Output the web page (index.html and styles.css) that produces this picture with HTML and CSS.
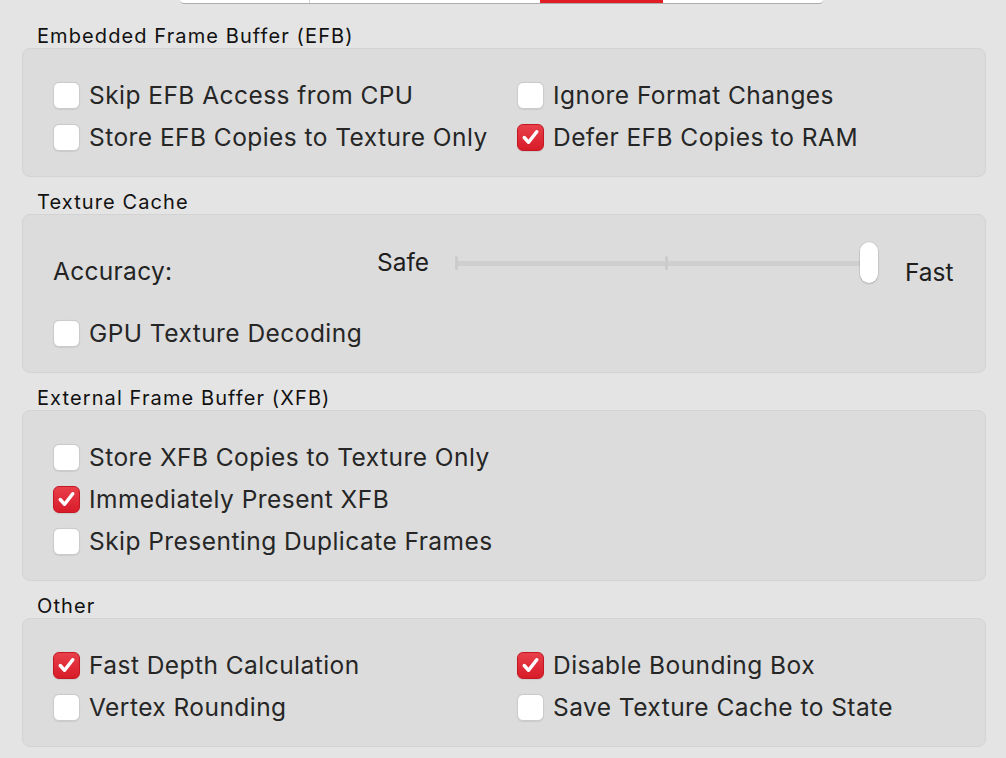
FILE: index.html
```html
<!DOCTYPE html>
<html>
<head>
<meta charset="utf-8">
<link rel="stylesheet" href="styles.css">
</head>
<body>
<div class="tabbar">
  <div class="tab tab-a"></div>
  <div class="tab tab-b"></div>
  <div class="tab tab-sel"></div>
  <div class="tab tab-c"></div>
</div>

<div class="content">
  <div class="group-title">Embedded Frame Buffer (EFB)</div>
  <div class="group">
    <div class="grid2">
      <label class="cb"><span class="box"></span><span class="lbl">Skip EFB Access from CPU</span></label>
      <label class="cb"><span class="box"></span><span class="lbl">Ignore Format Changes</span></label>
      <label class="cb"><span class="box"></span><span class="lbl">Store EFB Copies to Texture Only</span></label>
      <label class="cb"><span class="box on"><svg viewBox="0 0 26 26"><path d="M6.5 13.5 L11 18.5 L19.5 7.5"/></svg></span><span class="lbl">Defer EFB Copies to RAM</span></label>
    </div>
  </div>

  <div class="group-title">Texture Cache</div>
  <div class="group">
    <div class="slider-row">
      <span class="acc">Accuracy:</span>
      <span class="safe">Safe</span>
      <div class="slider">
        <div class="track"></div>
        <div class="tick t0"></div>
        <div class="tick t1"></div>
        <div class="knob"></div>
      </div>
      <span class="fast">Fast</span>
    </div>
    <div class="list gpu">
      <label class="cb"><span class="box"></span><span class="lbl">GPU Texture Decoding</span></label>
    </div>
  </div>

  <div class="group-title">External Frame Buffer (XFB)</div>
  <div class="group">
    <div class="list">
      <label class="cb"><span class="box"></span><span class="lbl">Store XFB Copies to Texture Only</span></label>
      <label class="cb"><span class="box on"><svg viewBox="0 0 26 26"><path d="M6.5 13.5 L11 18.5 L19.5 7.5"/></svg></span><span class="lbl">Immediately Present XFB</span></label>
      <label class="cb"><span class="box"></span><span class="lbl">Skip Presenting Duplicate Frames</span></label>
    </div>
  </div>

  <div class="group-title">Other</div>
  <div class="group">
    <div class="grid2">
      <label class="cb"><span class="box on"><svg viewBox="0 0 26 26"><path d="M6.5 13.5 L11 18.5 L19.5 7.5"/></svg></span><span class="lbl">Fast Depth Calculation</span></label>
      <label class="cb"><span class="box on"><svg viewBox="0 0 26 26"><path d="M6.5 13.5 L11 18.5 L19.5 7.5"/></svg></span><span class="lbl">Disable Bounding Box</span></label>
      <label class="cb"><span class="box"></span><span class="lbl">Vertex Rounding</span></label>
      <label class="cb"><span class="box"></span><span class="lbl">Save Texture Cache to State</span></label>
    </div>
  </div>
</div>
</body>
</html>
```

FILE: styles.css
```css
* { box-sizing: border-box; }
html, body {
  margin: 0;
  padding: 0;
  background: #e4e4e4;
  width: 1006px;
  height: 758px;
  overflow: hidden;
}
body {
  font-family: Inter, "Noto Sans", "Liberation Sans", sans-serif;
  color: #242424;
}

.tabbar {
  display: flex;
  margin-left: 180px;
  width: 643px;
  height: 4px;
  background: #ffffff;
  border-bottom: 1px solid #adadad;
  border-radius: 0 0 7px 7px;
  overflow: hidden;
}
.tab { height: 100%; }
.tab-a { width: 130px; border-right: 1px solid #d6d6d6; }
.tab-b { width: 230px; }
.tab-sel { width: 123px; background: #e31b24; }
.tab-c { flex: 1; }

.content {
  padding: 20px 20px 0 22px;
}

.group-title {
  height: 24px;
  line-height: 24px;
  font-size: 20px;
  color: #111111;
  padding-left: 15px;
  letter-spacing: 1.1px;
}

.group {
  background: #dcdcdc;
  border: 1px solid #d3d3d3;
  border-radius: 8px;
  padding: 25px 30px 18px 30px;
  margin-bottom: 13px;
}

.grid2 {
  display: grid;
  grid-template-columns: 464px 1fr;
  grid-auto-rows: 42px;
}
.list {
  display: grid;
  grid-auto-rows: 42px;
}

.cb {
  display: flex;
  align-items: center;
  gap: 9px;
}
.box {
  width: 27px;
  height: 27px;
  flex: none;
  background: #ffffff;
  border: 1px solid #cbcbcb;
  border-radius: 6px;
  box-shadow: 0 0.5px 1px rgba(0,0,0,0.08);
  display: flex;
  align-items: center;
  justify-content: center;
}
.box.on {
  background: linear-gradient(#e8404a, #d81b29);
  border-color: #c41723;
}
.box svg {
  width: 26px;
  height: 26px;
}
.box svg path {
  fill: none;
  stroke: #ffffff;
  stroke-width: 3.6;
  stroke-linecap: round;
  stroke-linejoin: round;
}
.lbl {
  font-size: 24.5px;
  line-height: 30px;
  color: #262626;
  white-space: nowrap;
  letter-spacing: 0.45px;
}

.slider-row {
  display: flex;
  align-items: flex-start;
  height: 46px;
}
.acc {
  font-size: 24.5px;
  line-height: 30px;
  margin-top: 16px;
  width: 324px;
  flex: none;
  letter-spacing: 0.3px;
}
.safe {
  font-size: 24.5px;
  line-height: 30px;
  margin-top: 7px;
  width: 78px;
  flex: none;
  color: #1e1e1e;
}
.slider {
  position: relative;
  width: 423px;
  height: 42px;
  margin-top: 2px;
  flex: none;
}
.track {
  position: absolute;
  left: 0;
  right: 6px;
  top: 19px;
  height: 5px;
  border-radius: 3px;
  background: #cfcfcf;
}
.tick {
  position: absolute;
  top: 14px;
  width: 3px;
  height: 14px;
  border-radius: 1.5px;
  background: #cbcbcb;
}
.t0 { left: 0; }
.t1 { left: 210px; }
.knob {
  position: absolute;
  right: 0;
  top: 0;
  width: 18px;
  height: 41px;
  border-radius: 9px;
  background: #ffffff;
  box-shadow: 0 0 0 0.5px rgba(0,0,0,0.12), 0 1px 2px rgba(0,0,0,0.15);
}
.fast {
  font-size: 24.5px;
  line-height: 30px;
  margin-top: 17px;
  margin-left: 27px;
  color: #1e1e1e;
}
.gpu {
  margin-top: 26px;
}
```
